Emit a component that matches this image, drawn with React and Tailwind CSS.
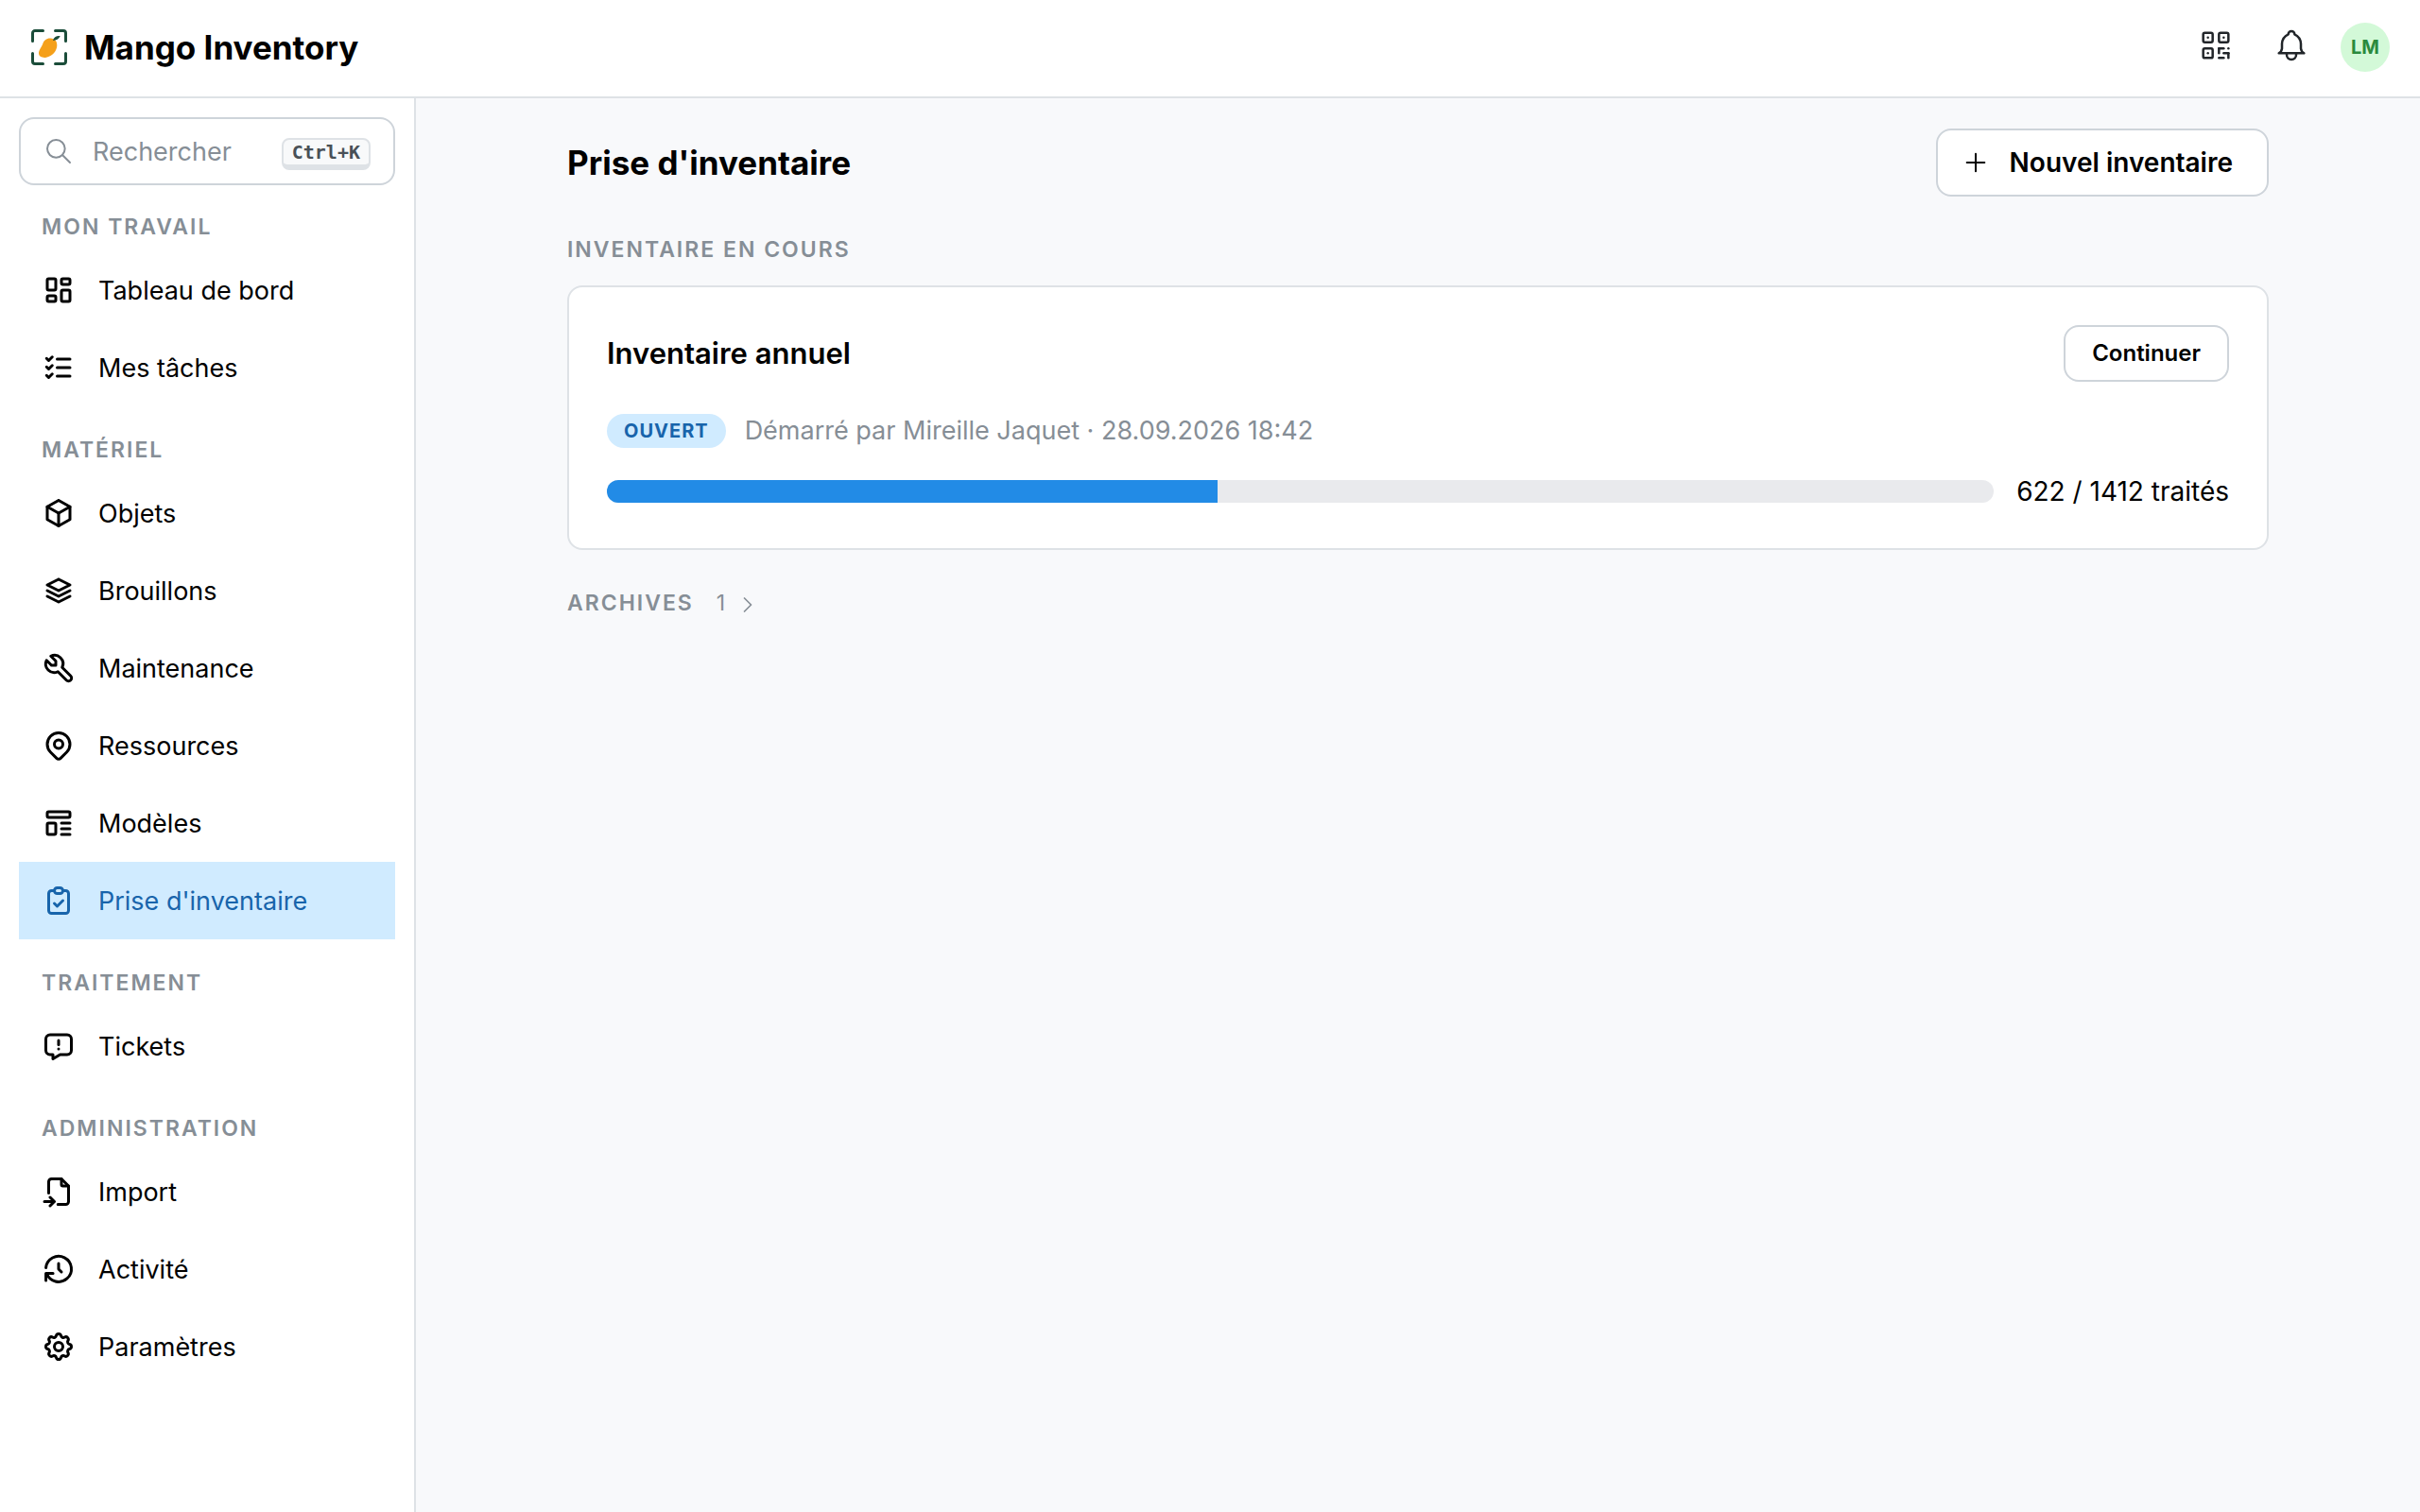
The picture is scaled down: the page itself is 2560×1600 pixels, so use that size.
import React, { useState } from 'react';
import {
  TbBell,
  TbBox,
  TbChevronRight,
  TbClipboardCheck,
  TbFileImport,
  TbHistory,
  TbLayoutDashboard,
  TbListCheck,
  TbMapPin,
  TbMessageReport,
  TbPlus,
  TbQrcode,
  TbSearch,
  TbSettings,
  TbStack2,
  TbTemplate,
  TbTool,
} from 'react-icons/tb';

const NAV_GROUPS = [
  {
    label: 'Mon travail',
    items: [
      { label: 'Tableau de bord', icon: TbLayoutDashboard },
      { label: 'Mes tâches', icon: TbListCheck },
    ],
  },
  {
    label: 'Matériel',
    items: [
      { label: 'Objets', icon: TbBox },
      { label: 'Brouillons', icon: TbStack2 },
      { label: 'Maintenance', icon: TbTool },
      { label: 'Ressources', icon: TbMapPin },
      { label: 'Modèles', icon: TbTemplate },
      { label: "Prise d'inventaire", icon: TbClipboardCheck },
    ],
  },
  {
    label: 'Traitement',
    items: [{ label: 'Tickets', icon: TbMessageReport }],
  },
  {
    label: 'Administration',
    items: [
      { label: 'Import', icon: TbFileImport },
      { label: 'Activité', icon: TbHistory },
      { label: 'Paramètres', icon: TbSettings },
    ],
  },
];

const Logo = () => (
  <svg viewBox="0 0 38 38" className="size-[38px]" fill="none" aria-hidden="true">
    <path
      d="M1.5 12.5V4A2.5 2.5 0 0 1 4 1.5h8.5M25.5 1.5H34A2.5 2.5 0 0 1 36.5 4v8.5M36.5 25.5V34a2.5 2.5 0 0 1-2.5 2.5h-8.5M12.5 36.5H4A2.5 2.5 0 0 1 1.5 34v-8.5"
      stroke="#1b4d3a"
      strokeWidth="3"
      strokeLinecap="round"
    />
    <path
      d="M22 9.8C17 8.8 13.5 11.5 12.2 15.5C11 19 7.9 22 8 25.5C8.2 29 12 30.4 16 29.7C22.5 28.6 27 23 27.3 17.5C27.5 13.5 26 10.6 22 9.8Z"
      fill="#f5a01a"
    />
    <path d="M23 12C23.8 8.4 27 6.6 30.7 7.2C29.2 10.5 26.5 11.6 23 12Z" fill="#1b4d3a" />
  </svg>
);

const Header = () => (
  <header className="flex h-[104px] items-center justify-between border-b-2 border-[#dee2e6] bg-white pl-[33px] pr-8">
    <div className="flex items-center gap-[18px] pb-0.5">
      <Logo />
      <span className="text-[35px] font-bold leading-[48px]">Mango Inventory</span>
    </div>
    <div className="flex items-center gap-7 pb-0.5">
      <div className="flex items-center gap-8 pb-1">
        <button type="button" aria-label="Scanner un code" className="flex size-12 items-center justify-center text-[#212529]">
          <TbQrcode size={40} strokeWidth={1.5} />
        </button>
        <button type="button" aria-label="Notifications" className="flex size-12 items-center justify-center text-[#212529]">
          <TbBell size={40} strokeWidth={1.5} />
        </button>
      </div>
      <button
        type="button"
        aria-label="Compte"
        className="flex size-[52px] items-center justify-center rounded-full bg-[#d3f9d8] text-[20px] font-bold text-[#2b8a3e]"
      >
        LM
      </button>
    </div>
  </header>
);

const SearchBox = () => {
  const [query, setQuery] = useState('');

  return (
    <label className="flex h-[72px] items-center rounded-2xl border-2 border-[#ced4da] bg-white px-6 text-[#868e96]">
      <TbSearch size={32} strokeWidth={1.5} className="shrink-0" />
      <input
        type="text"
        value={query}
        onChange={(e) => setQuery(e.target.value)}
        placeholder="Rechercher"
        aria-label="Rechercher"
        className="ml-5 min-w-0 flex-1 pt-0.5 text-[27px] outline-none placeholder:text-[#868e96]"
      />
      <kbd className="mt-1.5 rounded-lg border-2 border-b-[6px] border-[#dee2e6] bg-[#f8f9fa] px-[9px] font-['DejaVu_Sans_Mono',monospace] text-[20px] font-bold leading-[26px] text-[#495057]">
        Ctrl+K
      </kbd>
    </label>
  );
};

const NavItem = ({ item, active, onSelect }) => {
  const Icon = item.icon;

  return (
    <a
      href="#"
      onClick={(e) => {
        e.preventDefault();
        onSelect(item.label);
      }}
      aria-current={active ? 'page' : undefined}
      className={`flex h-[82px] items-center gap-6 px-6 text-[27px] ${
        active ? 'bg-[#d0ebff] text-[#1864ab]' : 'text-black hover:bg-[#f8f9fa]'
      }`}
    >
      <Icon size={36} strokeWidth={2} className="shrink-0" />
      <span className="pt-0.5">{item.label}</span>
    </a>
  );
};

const Sidebar = ({ current, onSelect }) => (
  <aside className="w-[440px] shrink-0 border-r-2 border-[#dee2e6] bg-white p-5">
    <SearchBox />
    <nav className="-mt-0.5">
      {NAV_GROUPS.map((group) => (
        <section key={group.label}>
          <h2 className="px-6 pb-3 pt-8 text-[23px] font-semibold uppercase leading-7 tracking-[2px] text-[#868e96]">
            {group.label}
          </h2>
          {group.items.map((item) => (
            <NavItem key={item.label} item={item} active={item.label === current} onSelect={onSelect} />
          ))}
        </section>
      ))}
    </nav>
  </aside>
);

const InventoryCard = ({ title, startedBy, startedAt, done, total }) => (
  <article className="rounded-2xl border-2 border-[#dee2e6] bg-white p-10">
    <div className="flex items-center justify-between">
      <h3 className="text-[31px] font-semibold leading-10">{title}</h3>
      <button
        type="button"
        className="h-[60px] rounded-2xl border-2 border-[#ced4da] bg-white px-7 text-[24px] font-semibold"
      >
        Continuer
      </button>
    </div>
    <div className="mt-8 flex items-center gap-5">
      <span className="flex h-9 items-center rounded-full bg-[#d0ebff] px-[18px] text-[20px] font-bold uppercase tracking-[1px] text-[#1864ab]">
        Ouvert
      </span>
      <span className="text-[27px] leading-10 text-[#868e96]">
        Démarré par {startedBy} · {startedAt}
      </span>
    </div>
    <div className="mt-6 flex items-center gap-6">
      <div
        role="progressbar"
        aria-label={title}
        aria-valuenow={done}
        aria-valuemax={total}
        className="h-6 flex-1 overflow-hidden rounded-full bg-[#e9eaed]"
      >
        <div className="h-full bg-[#228be6]" style={{ width: `${(done / total) * 100}%` }} />
      </div>
      <span className="text-[28px] leading-10">
        {done} / {total} traités
      </span>
    </div>
  </article>
);

export default function App() {
  const [current, setCurrent] = useState("Prise d'inventaire");

  return (
    <div className="flex min-h-screen flex-col bg-[#f8f9fb] font-['Inter',sans-serif] text-black">
      <Header />
      <div className="flex flex-1">
        <Sidebar current={current} onSelect={setCurrent} />
        <main className="flex-1 p-8">
          <div className="mx-auto max-w-[1800px]">
            <div className="flex items-center justify-between">
              <h1 className="text-[35px] font-bold leading-[48px]">Prise d'inventaire</h1>
              <button
                type="button"
                className="flex h-[72px] items-center gap-5 rounded-2xl border-2 border-[#ced4da] bg-white pl-6 pr-9 text-[28px] font-semibold"
              >
                <TbPlus size={32} strokeWidth={1.5} />
                Nouvel inventaire
              </button>
            </div>
            <h2 className="mb-6 mt-[42px] text-[23px] font-semibold uppercase leading-7 tracking-[2px] text-[#868e96]">
              Inventaire en cours
            </h2>
            <InventoryCard
              title="Inventaire annuel"
              startedBy="Mireille Jaquet"
              startedAt="28.09.2026 18:42"
              done={622}
              total={1412}
            />
            <button type="button" className="mt-10 flex items-center text-[23px] leading-7 text-[#868e96]">
              <span className="font-semibold uppercase tracking-[2px]">Archives</span>
              <span className="ml-6">1</span>
              <TbChevronRight size={28} strokeWidth={1.5} className="ml-2.5 mt-1" />
            </button>
          </div>
        </main>
      </div>
    </div>
  );
}
